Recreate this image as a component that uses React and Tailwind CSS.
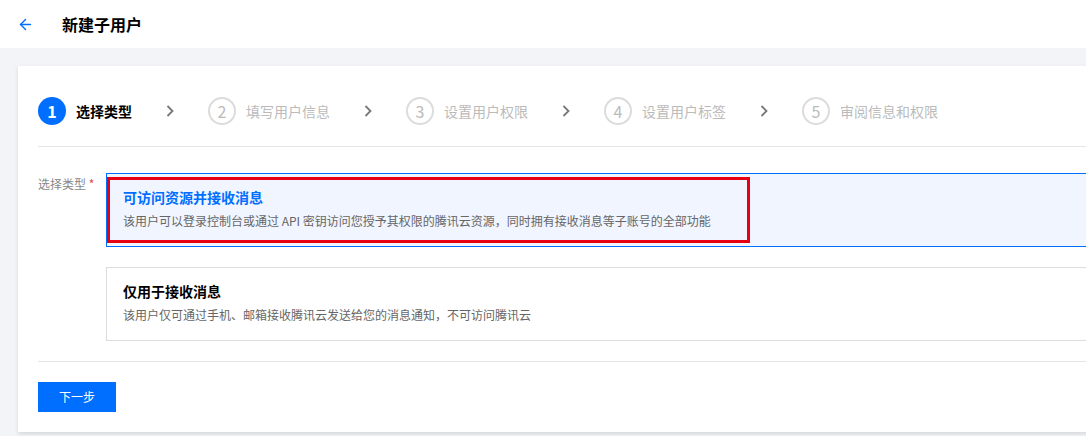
import React from 'react';
import { ArrowLeft } from 'lucide-react';

const steps = ['选择类型', '填写用户信息', '设置用户权限', '设置用户标签', '审阅信息和权限'];

const Chevron = () => (
    <svg width="10" height="14" viewBox="0 0 10 14" className="mx-[33px] shrink-0">
        <path d="M2.5 2 L7.5 7 L2.5 12" fill="none" stroke="#777" strokeWidth="1.8" />
    </svg>
);

const App = () => {
    return (
        <div
            className="w-[1086px] h-[436px] overflow-hidden bg-[#f3f4f7] text-[#000]"
            style={{ fontFamily: '"Noto Sans CJK SC", "Noto Sans", sans-serif' }}
        >
            {/* Header */}
            <div className="h-12 bg-white flex items-center pl-[17px]">
                <ArrowLeft size={17} strokeWidth={2} className="text-[#006eff]" />
                <h1 className="ml-[28px] text-[16px] font-bold leading-6 text-[#000]">新建子用户</h1>
            </div>

            <div className="pt-[18px] pl-[18px]">
                <div className="w-[1100px] bg-white shadow-[0_2px_4px_rgba(0,0,0,0.12)] px-5 pt-[31px] pb-5">
                    {/* Steps */}
                    <div className="flex items-center h-7">
                        {steps.map((label, i) => (
                            <React.Fragment key={label}>
                                <div className="flex items-center shrink-0">
                                    {i === 0 ? (
                                        <div className="w-7 h-7 rounded-full bg-[#006eff] text-white text-[16px] font-bold flex items-center justify-center">
                                            1
                                        </div>
                                    ) : (
                                        <div className="w-7 h-7 rounded-full border-2 border-[#dcdcdc] text-[#bbb] text-[16px] flex items-center justify-center">
                                            {i + 1}
                                        </div>
                                    )}
                                    <span className={`ml-[10px] text-[14px] leading-5 ${i === 0 ? 'font-bold text-[#000]' : 'text-[#bbb]'}`}>
                                        {label}
                                    </span>
                                </div>
                                {i < steps.length - 1 && <Chevron />}
                            </React.Fragment>
                        ))}
                    </div>

                    <div className="mt-[21px] border-t border-[#e5e5e5]" />

                    {/* Type selection */}
                    <div className="flex mt-[26px]">
                        <div className="w-[68px] shrink-0 pt-[1px] text-[12px] leading-5 text-[#888]">
                            选择类型 <span className="text-[#e54545]">*</span>
                        </div>
                        <div className="flex-1 flex flex-col gap-5">
                            <div className="relative border border-[#006eff] bg-[#f0f5ff] pl-4 pt-[13px] pb-[15px]">
                                <div className="text-[14px] font-bold leading-5 text-[#006eff]">可访问资源并接收消息</div>
                                <div className="mt-1 text-[12px] leading-5 text-[#666]">
                                    该用户可以登录控制台或通过 API 密钥访问您授予其权限的腾讯云资源，同时拥有接收消息等子账号的全部功能
                                </div>
                                <div className="absolute left-0 top-[3px] w-[643px] h-[66px] border-[3px] border-[#e60012]" />
                            </div>
                            <div className="border border-[#dddddd] bg-white pl-4 pt-[13px] pb-[15px]">
                                <div className="text-[14px] font-bold leading-5 text-[#000]">仅用于接收消息</div>
                                <div className="mt-1 text-[12px] leading-5 text-[#666]">
                                    该用户仅可通过手机、邮箱接收腾讯云发送给您的消息通知，不可访问腾讯云
                                </div>
                            </div>
                        </div>
                    </div>

                    <div className="mt-5 border-t border-[#e5e5e5]" />

                    <button className="mt-5 w-[78px] h-[30px] bg-[#006eff] text-white text-[12px] flex items-center justify-center">
                        下一步
                    </button>
                </div>
            </div>
        </div>
    );
};

export default App;
